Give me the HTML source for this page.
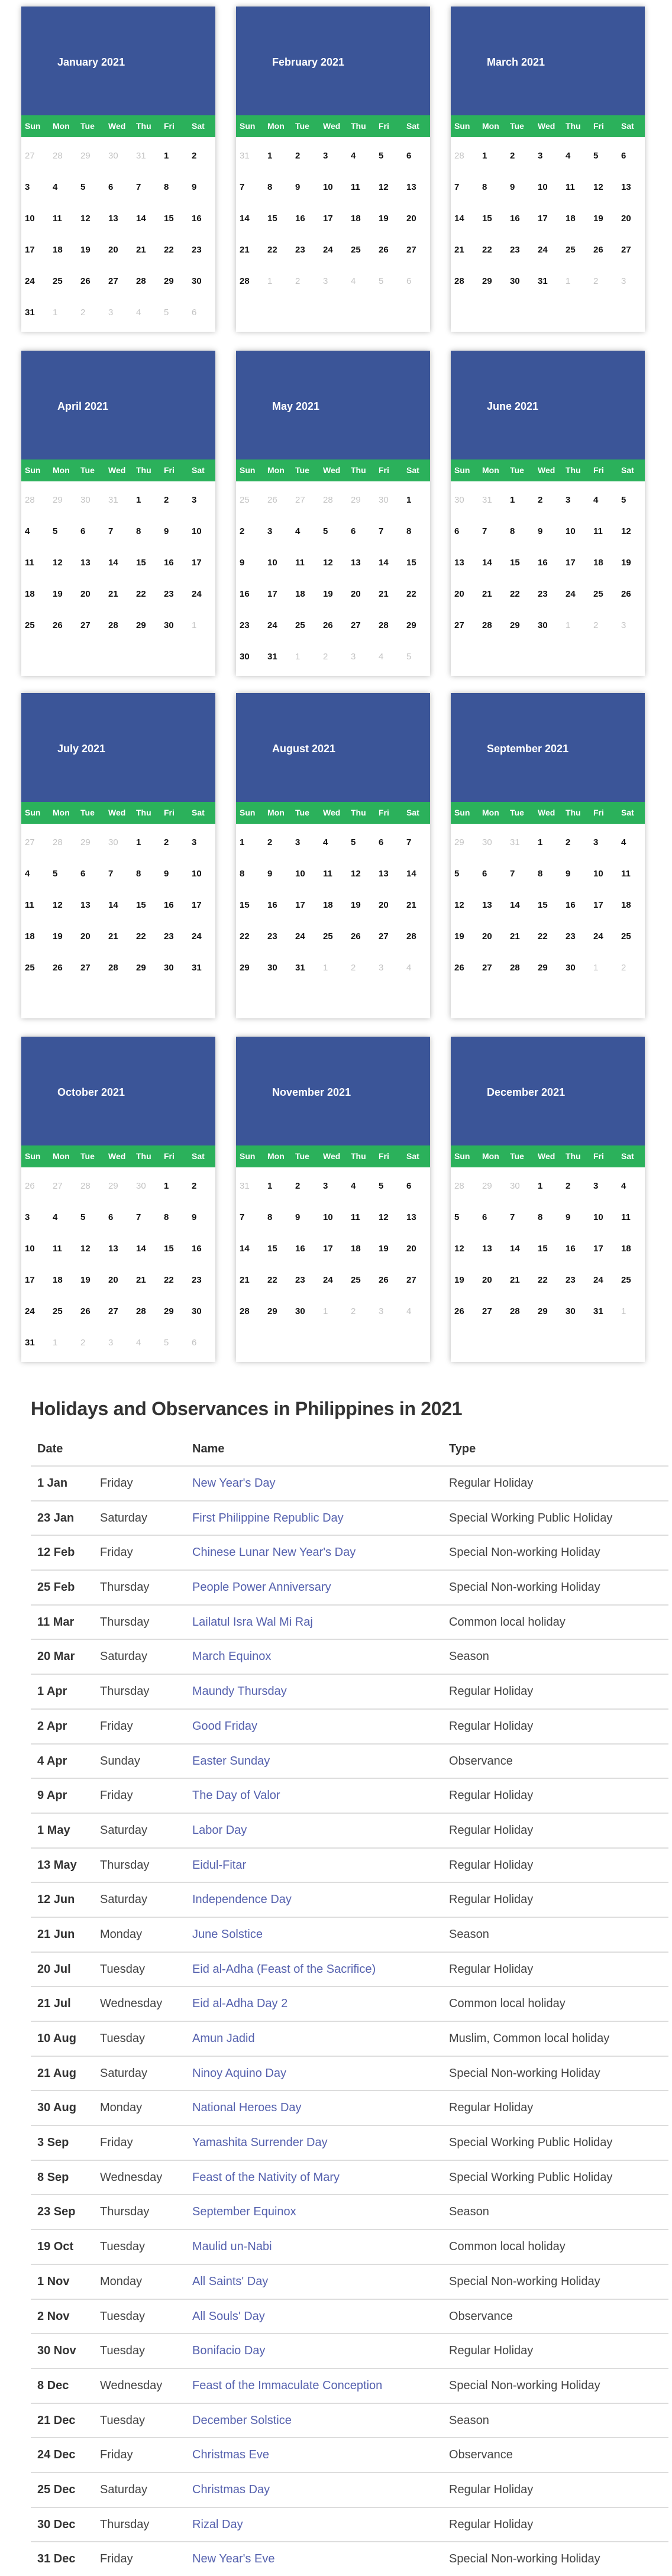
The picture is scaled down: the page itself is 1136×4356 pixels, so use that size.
<!DOCTYPE html>
<html><head><meta charset="utf-8"><style>
*{margin:0;padding:0;box-sizing:border-box}
body{width:1136px;height:4350px;background:#fff;position:relative;font-family:"Liberation Sans",sans-serif;overflow:hidden}
.c{position:absolute;width:328px;height:550px;background:#fff;box-shadow:0 0 9px rgba(0,0,0,.28)}
.h{height:184px;background:#3b5598;color:#fff;font-weight:bold;font-size:18px;padding:84px 0 0 61px}
.w{height:37px;background:#2bb15b;display:grid;grid-template-columns:repeat(7,47px);padding-left:6px;color:#fff;font-weight:bold;font-size:14px;line-height:37px}
.b{display:grid;grid-template-columns:repeat(7,47px);grid-auto-rows:53px;padding:5px 0 0 6px;font-size:15px;font-weight:bold;color:#111;line-height:53px}
.b i{font-style:normal;color:#c4c4c4;font-weight:normal}
h2{position:absolute;left:52px;top:2364px;font-size:32px;color:#333;font-weight:bold;letter-spacing:-0.3px}
.t{position:absolute;left:52px;top:2420px;width:1078px}
.r{position:relative;height:58.7px;border-top:2px solid #ddd;font-size:20px;color:#444}
.r span{position:absolute;top:0;line-height:56px;white-space:nowrap}
.r .d{left:11px;font-weight:bold;color:#333}
.r .y{left:117px}
.r .n{left:273px;color:#5561ae}
.r .p{left:707px}
.hd{height:58px;border-top:none;font-weight:bold;color:#333}
.hd span{line-height:60px}
</style></head><body>

<div class="c" style="left:36px;top:11px"><div class="h">January 2021</div><div class="w"><span>Sun</span><span>Mon</span><span>Tue</span><span>Wed</span><span>Thu</span><span>Fri</span><span>Sat</span></div><div class="b"><i>27</i><i>28</i><i>29</i><i>30</i><i>31</i><span>1</span><span>2</span><span>3</span><span>4</span><span>5</span><span>6</span><span>7</span><span>8</span><span>9</span><span>10</span><span>11</span><span>12</span><span>13</span><span>14</span><span>15</span><span>16</span><span>17</span><span>18</span><span>19</span><span>20</span><span>21</span><span>22</span><span>23</span><span>24</span><span>25</span><span>26</span><span>27</span><span>28</span><span>29</span><span>30</span><span>31</span><i>1</i><i>2</i><i>3</i><i>4</i><i>5</i><i>6</i></div></div>

<div class="c" style="left:399px;top:11px"><div class="h">February 2021</div><div class="w"><span>Sun</span><span>Mon</span><span>Tue</span><span>Wed</span><span>Thu</span><span>Fri</span><span>Sat</span></div><div class="b"><i>31</i><span>1</span><span>2</span><span>3</span><span>4</span><span>5</span><span>6</span><span>7</span><span>8</span><span>9</span><span>10</span><span>11</span><span>12</span><span>13</span><span>14</span><span>15</span><span>16</span><span>17</span><span>18</span><span>19</span><span>20</span><span>21</span><span>22</span><span>23</span><span>24</span><span>25</span><span>26</span><span>27</span><span>28</span><i>1</i><i>2</i><i>3</i><i>4</i><i>5</i><i>6</i></div></div>

<div class="c" style="left:762px;top:11px"><div class="h">March 2021</div><div class="w"><span>Sun</span><span>Mon</span><span>Tue</span><span>Wed</span><span>Thu</span><span>Fri</span><span>Sat</span></div><div class="b"><i>28</i><span>1</span><span>2</span><span>3</span><span>4</span><span>5</span><span>6</span><span>7</span><span>8</span><span>9</span><span>10</span><span>11</span><span>12</span><span>13</span><span>14</span><span>15</span><span>16</span><span>17</span><span>18</span><span>19</span><span>20</span><span>21</span><span>22</span><span>23</span><span>24</span><span>25</span><span>26</span><span>27</span><span>28</span><span>29</span><span>30</span><span>31</span><i>1</i><i>2</i><i>3</i></div></div>

<div class="c" style="left:36px;top:593px"><div class="h">April 2021</div><div class="w"><span>Sun</span><span>Mon</span><span>Tue</span><span>Wed</span><span>Thu</span><span>Fri</span><span>Sat</span></div><div class="b"><i>28</i><i>29</i><i>30</i><i>31</i><span>1</span><span>2</span><span>3</span><span>4</span><span>5</span><span>6</span><span>7</span><span>8</span><span>9</span><span>10</span><span>11</span><span>12</span><span>13</span><span>14</span><span>15</span><span>16</span><span>17</span><span>18</span><span>19</span><span>20</span><span>21</span><span>22</span><span>23</span><span>24</span><span>25</span><span>26</span><span>27</span><span>28</span><span>29</span><span>30</span><i>1</i></div></div>

<div class="c" style="left:399px;top:593px"><div class="h">May 2021</div><div class="w"><span>Sun</span><span>Mon</span><span>Tue</span><span>Wed</span><span>Thu</span><span>Fri</span><span>Sat</span></div><div class="b"><i>25</i><i>26</i><i>27</i><i>28</i><i>29</i><i>30</i><span>1</span><span>2</span><span>3</span><span>4</span><span>5</span><span>6</span><span>7</span><span>8</span><span>9</span><span>10</span><span>11</span><span>12</span><span>13</span><span>14</span><span>15</span><span>16</span><span>17</span><span>18</span><span>19</span><span>20</span><span>21</span><span>22</span><span>23</span><span>24</span><span>25</span><span>26</span><span>27</span><span>28</span><span>29</span><span>30</span><span>31</span><i>1</i><i>2</i><i>3</i><i>4</i><i>5</i></div></div>

<div class="c" style="left:762px;top:593px"><div class="h">June 2021</div><div class="w"><span>Sun</span><span>Mon</span><span>Tue</span><span>Wed</span><span>Thu</span><span>Fri</span><span>Sat</span></div><div class="b"><i>30</i><i>31</i><span>1</span><span>2</span><span>3</span><span>4</span><span>5</span><span>6</span><span>7</span><span>8</span><span>9</span><span>10</span><span>11</span><span>12</span><span>13</span><span>14</span><span>15</span><span>16</span><span>17</span><span>18</span><span>19</span><span>20</span><span>21</span><span>22</span><span>23</span><span>24</span><span>25</span><span>26</span><span>27</span><span>28</span><span>29</span><span>30</span><i>1</i><i>2</i><i>3</i></div></div>

<div class="c" style="left:36px;top:1172px"><div class="h">July 2021</div><div class="w"><span>Sun</span><span>Mon</span><span>Tue</span><span>Wed</span><span>Thu</span><span>Fri</span><span>Sat</span></div><div class="b"><i>27</i><i>28</i><i>29</i><i>30</i><span>1</span><span>2</span><span>3</span><span>4</span><span>5</span><span>6</span><span>7</span><span>8</span><span>9</span><span>10</span><span>11</span><span>12</span><span>13</span><span>14</span><span>15</span><span>16</span><span>17</span><span>18</span><span>19</span><span>20</span><span>21</span><span>22</span><span>23</span><span>24</span><span>25</span><span>26</span><span>27</span><span>28</span><span>29</span><span>30</span><span>31</span></div></div>

<div class="c" style="left:399px;top:1172px"><div class="h">August 2021</div><div class="w"><span>Sun</span><span>Mon</span><span>Tue</span><span>Wed</span><span>Thu</span><span>Fri</span><span>Sat</span></div><div class="b"><span>1</span><span>2</span><span>3</span><span>4</span><span>5</span><span>6</span><span>7</span><span>8</span><span>9</span><span>10</span><span>11</span><span>12</span><span>13</span><span>14</span><span>15</span><span>16</span><span>17</span><span>18</span><span>19</span><span>20</span><span>21</span><span>22</span><span>23</span><span>24</span><span>25</span><span>26</span><span>27</span><span>28</span><span>29</span><span>30</span><span>31</span><i>1</i><i>2</i><i>3</i><i>4</i></div></div>

<div class="c" style="left:762px;top:1172px"><div class="h">September 2021</div><div class="w"><span>Sun</span><span>Mon</span><span>Tue</span><span>Wed</span><span>Thu</span><span>Fri</span><span>Sat</span></div><div class="b"><i>29</i><i>30</i><i>31</i><span>1</span><span>2</span><span>3</span><span>4</span><span>5</span><span>6</span><span>7</span><span>8</span><span>9</span><span>10</span><span>11</span><span>12</span><span>13</span><span>14</span><span>15</span><span>16</span><span>17</span><span>18</span><span>19</span><span>20</span><span>21</span><span>22</span><span>23</span><span>24</span><span>25</span><span>26</span><span>27</span><span>28</span><span>29</span><span>30</span><i>1</i><i>2</i></div></div>

<div class="c" style="left:36px;top:1753px"><div class="h">October 2021</div><div class="w"><span>Sun</span><span>Mon</span><span>Tue</span><span>Wed</span><span>Thu</span><span>Fri</span><span>Sat</span></div><div class="b"><i>26</i><i>27</i><i>28</i><i>29</i><i>30</i><span>1</span><span>2</span><span>3</span><span>4</span><span>5</span><span>6</span><span>7</span><span>8</span><span>9</span><span>10</span><span>11</span><span>12</span><span>13</span><span>14</span><span>15</span><span>16</span><span>17</span><span>18</span><span>19</span><span>20</span><span>21</span><span>22</span><span>23</span><span>24</span><span>25</span><span>26</span><span>27</span><span>28</span><span>29</span><span>30</span><span>31</span><i>1</i><i>2</i><i>3</i><i>4</i><i>5</i><i>6</i></div></div>

<div class="c" style="left:399px;top:1753px"><div class="h">November 2021</div><div class="w"><span>Sun</span><span>Mon</span><span>Tue</span><span>Wed</span><span>Thu</span><span>Fri</span><span>Sat</span></div><div class="b"><i>31</i><span>1</span><span>2</span><span>3</span><span>4</span><span>5</span><span>6</span><span>7</span><span>8</span><span>9</span><span>10</span><span>11</span><span>12</span><span>13</span><span>14</span><span>15</span><span>16</span><span>17</span><span>18</span><span>19</span><span>20</span><span>21</span><span>22</span><span>23</span><span>24</span><span>25</span><span>26</span><span>27</span><span>28</span><span>29</span><span>30</span><i>1</i><i>2</i><i>3</i><i>4</i></div></div>

<div class="c" style="left:762px;top:1753px"><div class="h">December 2021</div><div class="w"><span>Sun</span><span>Mon</span><span>Tue</span><span>Wed</span><span>Thu</span><span>Fri</span><span>Sat</span></div><div class="b"><i>28</i><i>29</i><i>30</i><span>1</span><span>2</span><span>3</span><span>4</span><span>5</span><span>6</span><span>7</span><span>8</span><span>9</span><span>10</span><span>11</span><span>12</span><span>13</span><span>14</span><span>15</span><span>16</span><span>17</span><span>18</span><span>19</span><span>20</span><span>21</span><span>22</span><span>23</span><span>24</span><span>25</span><span>26</span><span>27</span><span>28</span><span>29</span><span>30</span><span>31</span><i>1</i></div></div>

<h2>Holidays and Observances in Philippines in 2021</h2>
<div class="t">
<div class="r hd"><span class="d">Date</span><span class="n" style="color:#333">Name</span><span class="p">Type</span></div>
<div class="r"><span class="d">1 Jan</span><span class="y">Friday</span><span class="n">New Year's Day</span><span class="p">Regular Holiday</span></div>
<div class="r"><span class="d">23 Jan</span><span class="y">Saturday</span><span class="n">First Philippine Republic Day</span><span class="p">Special Working Public Holiday</span></div>
<div class="r"><span class="d">12 Feb</span><span class="y">Friday</span><span class="n">Chinese Lunar New Year's Day</span><span class="p">Special Non-working Holiday</span></div>
<div class="r"><span class="d">25 Feb</span><span class="y">Thursday</span><span class="n">People Power Anniversary</span><span class="p">Special Non-working Holiday</span></div>
<div class="r"><span class="d">11 Mar</span><span class="y">Thursday</span><span class="n">Lailatul Isra Wal Mi Raj</span><span class="p">Common local holiday</span></div>
<div class="r"><span class="d">20 Mar</span><span class="y">Saturday</span><span class="n">March Equinox</span><span class="p">Season</span></div>
<div class="r"><span class="d">1 Apr</span><span class="y">Thursday</span><span class="n">Maundy Thursday</span><span class="p">Regular Holiday</span></div>
<div class="r"><span class="d">2 Apr</span><span class="y">Friday</span><span class="n">Good Friday</span><span class="p">Regular Holiday</span></div>
<div class="r"><span class="d">4 Apr</span><span class="y">Sunday</span><span class="n">Easter Sunday</span><span class="p">Observance</span></div>
<div class="r"><span class="d">9 Apr</span><span class="y">Friday</span><span class="n">The Day of Valor</span><span class="p">Regular Holiday</span></div>
<div class="r"><span class="d">1 May</span><span class="y">Saturday</span><span class="n">Labor Day</span><span class="p">Regular Holiday</span></div>
<div class="r"><span class="d">13 May</span><span class="y">Thursday</span><span class="n">Eidul-Fitar</span><span class="p">Regular Holiday</span></div>
<div class="r"><span class="d">12 Jun</span><span class="y">Saturday</span><span class="n">Independence Day</span><span class="p">Regular Holiday</span></div>
<div class="r"><span class="d">21 Jun</span><span class="y">Monday</span><span class="n">June Solstice</span><span class="p">Season</span></div>
<div class="r"><span class="d">20 Jul</span><span class="y">Tuesday</span><span class="n">Eid al-Adha (Feast of the Sacrifice)</span><span class="p">Regular Holiday</span></div>
<div class="r"><span class="d">21 Jul</span><span class="y">Wednesday</span><span class="n">Eid al-Adha Day 2</span><span class="p">Common local holiday</span></div>
<div class="r"><span class="d">10 Aug</span><span class="y">Tuesday</span><span class="n">Amun Jadid</span><span class="p">Muslim, Common local holiday</span></div>
<div class="r"><span class="d">21 Aug</span><span class="y">Saturday</span><span class="n">Ninoy Aquino Day</span><span class="p">Special Non-working Holiday</span></div>
<div class="r"><span class="d">30 Aug</span><span class="y">Monday</span><span class="n">National Heroes Day</span><span class="p">Regular Holiday</span></div>
<div class="r"><span class="d">3 Sep</span><span class="y">Friday</span><span class="n">Yamashita Surrender Day</span><span class="p">Special Working Public Holiday</span></div>
<div class="r"><span class="d">8 Sep</span><span class="y">Wednesday</span><span class="n">Feast of the Nativity of Mary</span><span class="p">Special Working Public Holiday</span></div>
<div class="r"><span class="d">23 Sep</span><span class="y">Thursday</span><span class="n">September Equinox</span><span class="p">Season</span></div>
<div class="r"><span class="d">19 Oct</span><span class="y">Tuesday</span><span class="n">Maulid un-Nabi</span><span class="p">Common local holiday</span></div>
<div class="r"><span class="d">1 Nov</span><span class="y">Monday</span><span class="n">All Saints' Day</span><span class="p">Special Non-working Holiday</span></div>
<div class="r"><span class="d">2 Nov</span><span class="y">Tuesday</span><span class="n">All Souls' Day</span><span class="p">Observance</span></div>
<div class="r"><span class="d">30 Nov</span><span class="y">Tuesday</span><span class="n">Bonifacio Day</span><span class="p">Regular Holiday</span></div>
<div class="r"><span class="d">8 Dec</span><span class="y">Wednesday</span><span class="n">Feast of the Immaculate Conception</span><span class="p">Special Non-working Holiday</span></div>
<div class="r"><span class="d">21 Dec</span><span class="y">Tuesday</span><span class="n">December Solstice</span><span class="p">Season</span></div>
<div class="r"><span class="d">24 Dec</span><span class="y">Friday</span><span class="n">Christmas Eve</span><span class="p">Observance</span></div>
<div class="r"><span class="d">25 Dec</span><span class="y">Saturday</span><span class="n">Christmas Day</span><span class="p">Regular Holiday</span></div>
<div class="r"><span class="d">30 Dec</span><span class="y">Thursday</span><span class="n">Rizal Day</span><span class="p">Regular Holiday</span></div>
<div class="r"><span class="d">31 Dec</span><span class="y">Friday</span><span class="n">New Year's Eve</span><span class="p">Special Non-working Holiday</span></div>
</div>
</body></html>
